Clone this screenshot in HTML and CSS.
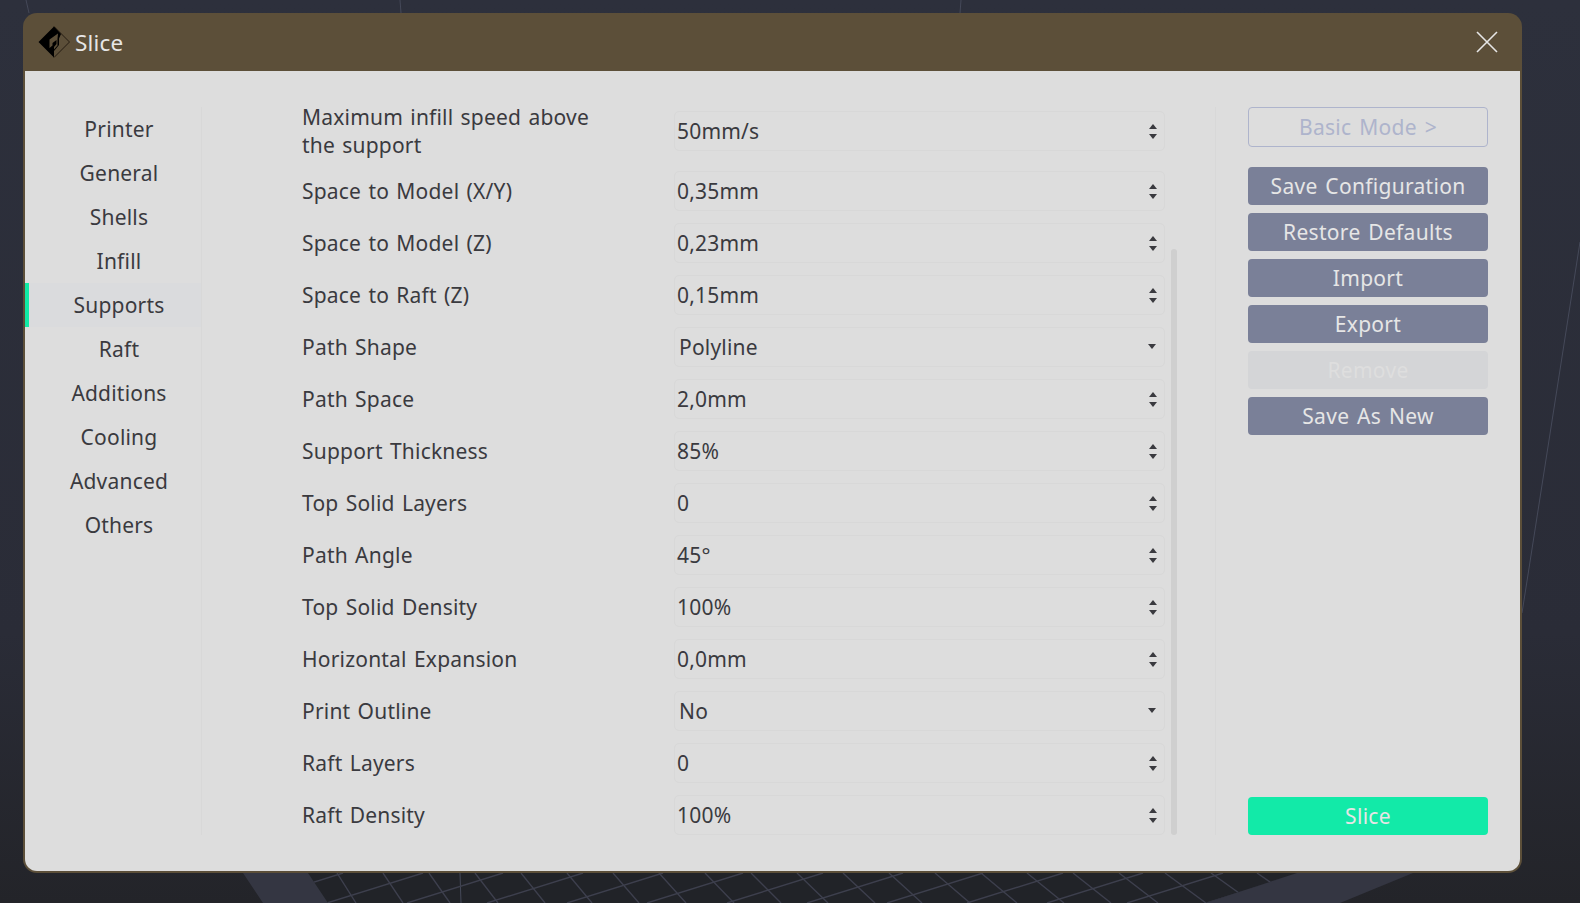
FILE: index.html
```html
<!DOCTYPE html>
<html lang="en">
<head>
<meta charset="utf-8">
<title>Slice</title>
<link rel="stylesheet" href="styles.css">
</head>
<body>
<svg class="scene" width="1580" height="903" viewBox="0 0 1580 903" aria-hidden="true">
  <defs>
    <clipPath id="gridclip"><polygon points="308,873 1297,873 1205,903 328,903"/></clipPath>
  </defs>
  <polygon class="floor" points="243,873 1413,873 1340,903 263,903"/>
  <polygon class="grid-floor" points="308,873 1297,873 1205,903 328,903"/>
  <path class="line-faint" d="M26 0L29 13M400 0L401 13M961 0L960 13M1580 242L1522 613M460 873L461 903"/>
  <g clip-path="url(#gridclip)">
    <path class="grid" d="M247 903L343 873M327 903L423 873M407 903L503 873M487 903L583 873M567 903L663 873M647 903L743 873M727 903L823 873M807 903L903 873M887 903L983 873M967 903L1063 873M1047 903L1143 873M1127 903L1223 873M1207 903L1303 873"/>
    <path class="grid" d="M337 873L356 903M383 873L403 903M429 873L450 903M475 873L498 903M521 873L545 903M567 873L592 903M613 873L639 903M659 873L686 903M705 873L734 903M751 873L781 903M797 873L828 903M843 873L875 903M889 873L922 903M935 873L970 903M981 873L1017 903M1027 873L1064 903M1073 873L1111 903M1119 873L1158 903M1165 873L1206 903M1211 873L1253 903M1257 873L1300 903"/>
  </g>
</svg>
<main class="dialog">
  <header class="titlebar">
    <svg class="logo" width="32" height="32" viewBox="0 0 32 32" aria-hidden="true">
      <path d="M16 .5L31.5 16L16 31.5" fill="none" stroke="#241d12" stroke-width="1"/>
      <path d="M16 .5L.5 16L16 31.5V25L21 19V12.5L23 8L16 .5Z" fill="#000"/>
      <path d="M20 7.5L11.5 13.5V22L14.5 19.5V17L18.5 14V18L16 21V23.5L19.5 19.5V13Z" fill="#5c4f39"/>
    </svg>
    <h1 class="title">Slice</h1>
    <svg class="close" width="22" height="22" viewBox="0 0 22 22" aria-hidden="true">
      <path d="M1 1L21 21M21 1L1 21" stroke="#e6e6e6" stroke-width="1.6" fill="none"/>
    </svg>
  </header>
  <div class="content">
    <nav class="sidebar">
      <a class="nav-item">Printer</a>
      <a class="nav-item">General</a>
      <a class="nav-item">Shells</a>
      <a class="nav-item">Infill</a>
      <a class="nav-item active">Supports</a>
      <a class="nav-item">Raft</a>
      <a class="nav-item">Additions</a>
      <a class="nav-item">Cooling</a>
      <a class="nav-item">Advanced</a>
      <a class="nav-item">Others</a>
    </nav>
    <section class="settings">
      <div class="row row-tall"><label class="label">Maximum infill speed above the support</label><div class="field"><span>50mm/s</span><i class="spin"></i></div></div>
      <div class="row"><label class="label">Space to Model (X/Y)</label><div class="field"><span>0,35mm</span><i class="spin"></i></div></div>
      <div class="row"><label class="label">Space to Model (Z)</label><div class="field"><span>0,23mm</span><i class="spin"></i></div></div>
      <div class="row"><label class="label">Space to Raft (Z)</label><div class="field"><span>0,15mm</span><i class="spin"></i></div></div>
      <div class="row"><label class="label">Path Shape</label><div class="field select"><span>Polyline</span><i class="caret"></i></div></div>
      <div class="row"><label class="label">Path Space</label><div class="field"><span>2,0mm</span><i class="spin"></i></div></div>
      <div class="row"><label class="label">Support Thickness</label><div class="field"><span>85%</span><i class="spin"></i></div></div>
      <div class="row"><label class="label">Top Solid Layers</label><div class="field"><span>0</span><i class="spin"></i></div></div>
      <div class="row"><label class="label">Path Angle</label><div class="field"><span>45°</span><i class="spin"></i></div></div>
      <div class="row"><label class="label">Top Solid Density</label><div class="field"><span>100%</span><i class="spin"></i></div></div>
      <div class="row"><label class="label">Horizontal Expansion</label><div class="field"><span>0,0mm</span><i class="spin"></i></div></div>
      <div class="row"><label class="label">Print Outline</label><div class="field select"><span>No</span><i class="caret"></i></div></div>
      <div class="row"><label class="label">Raft Layers</label><div class="field"><span>0</span><i class="spin"></i></div></div>
      <div class="row"><label class="label">Raft Density</label><div class="field"><span>100%</span><i class="spin"></i></div></div>
    </section>
    <div class="scroll-track"><div class="scroll-thumb"></div></div>
    <aside class="actions">
      <button class="btn btn-outline">Basic Mode &gt;</button>
      <div class="btn-stack">
        <button class="btn">Save Configuration</button>
        <button class="btn">Restore Defaults</button>
        <button class="btn">Import</button>
        <button class="btn">Export</button>
        <button class="btn btn-disabled">Remove</button>
        <button class="btn">Save As New</button>
      </div>
      <button class="btn btn-slice">Slice</button>
    </aside>
  </div>
</main>
</body>
</html>
```

FILE: styles.css
```css
* { box-sizing: border-box; }
html, body { margin: 0; height: 100%; }
body {
  width: 1580px;
  height: 903px;
  overflow: hidden;
  position: relative;
  background: linear-gradient(180deg, #2d303c 0%, #2a2c37 70%, #232429 100%);
  font-family: "Noto Sans", "Open Sans", sans-serif;
  color: #3a3a3f;
  letter-spacing: .2px;
  word-spacing: 1.6px;
  padding: 13px 0 0 23px;
}
.scene { position: absolute; left: 0; top: 0; }
.floor { fill: #343642; }
.grid-floor { fill: #212328; }
.grid { stroke: #3d3f4d; stroke-width: 1.4; fill: none; }
.line-faint { stroke: #454959; stroke-width: 1; fill: none; }
.dialog {
  position: relative;
  width: 1499px;
  height: 860px;
  border-radius: 14px;
  background: #5c4f39;
  display: flex;
  flex-direction: column;
}
.titlebar {
  height: 58px;
  flex: none;
  color: #e6e6e6;
  display: flex;
  align-items: center;
  padding: 0 24px 0 15px;
}
.logo { flex: none; margin-right: 5px; }
.title { font-size: 22.5px; font-weight: 400; margin: 0; flex: 1; }
.content {
  flex: 1;
  display: flex;
  margin: 0 2px 2px;
  padding-top: 36px;
  min-height: 0;
  background: #dddddd;
  border-radius: 0 0 12px 12px;
}
.sidebar {
  width: 177px;
  height: 728px;
  flex: none;
  border-right: 1px solid #d8d8d8;
  font-size: 21px;
}
.nav-item {
  display: flex;
  height: 44px;
  align-items: center;
  justify-content: center;
  padding-left: 12px;
}
.nav-item.active { background: #dadbdd; border-left: 4px solid #10eaa6; padding-left: 8px; }
.settings { width: 963px; flex: none; padding-left: 100px; font-size: 21px; }
.row { display: flex; align-items: center; height: 40px; margin-bottom: 12px; }
.row-tall { height: 48px; margin-bottom: 16px; }
.label { width: 372px; flex: none; line-height: 28px; padding-right: 50px; }
.field {
  width: 491px;
  height: 40px;
  flex: none;
  display: flex;
  align-items: center;
  justify-content: space-between;
  border: 1px solid #d8d8d8;
  border-radius: 5px;
  padding: 0 7px 0 2px;
}
.select { padding-left: 4px; }
.spin { width: 8px; height: 15px; position: relative; display: block; }
.spin::before, .spin::after { content: ""; position: absolute; left: 0; border: 4px solid transparent; }
.spin::before { top: 0; border-top: 0; border-bottom: 5.5px solid #3a3a3f; }
.spin::after { bottom: 0; border-bottom: 0; border-top: 5.5px solid #3a3a3f; }
.caret { display: block; width: 0; height: 0; border: 4px solid transparent; border-bottom: 0; border-top: 5.5px solid #3a3a3f; margin: -2px 1px 0 0; }
.scroll-track { width: 6px; height: 728px; flex: none; margin-left: 6px; position: relative; }
.scroll-thumb { position: absolute; top: 142px; bottom: 0; left: 0; right: 0; background: #cfcfcf; border-radius: 3px; }
.actions {
  width: 273px;
  height: 728px;
  flex: none;
  margin-left: 38px;
  border-left: 1px solid #d8d8d8;
  padding-left: 32px;
  display: flex;
  flex-direction: column;
}
.btn {
  width: 240px;
  height: 38px;
  flex: none;
  padding: 0;
  border: 0;
  border-radius: 4px;
  background: #7a8098;
  color: #e6e6e6;
  font: inherit;
  font-size: 21px;
  line-height: 1;
  letter-spacing: .3px;
  word-spacing: 2px;
}
.btn-outline { height: 40px; background: transparent; border: 1px solid #aeb4cc; color: #aeb4cc; }
.btn-stack { display: flex; flex-direction: column; gap: 8px; margin-top: 20px; }
.btn-disabled { background: #d4d5d7; color: #dedede; }
.btn-slice { margin-top: auto; background: #12eaa8; }
```
